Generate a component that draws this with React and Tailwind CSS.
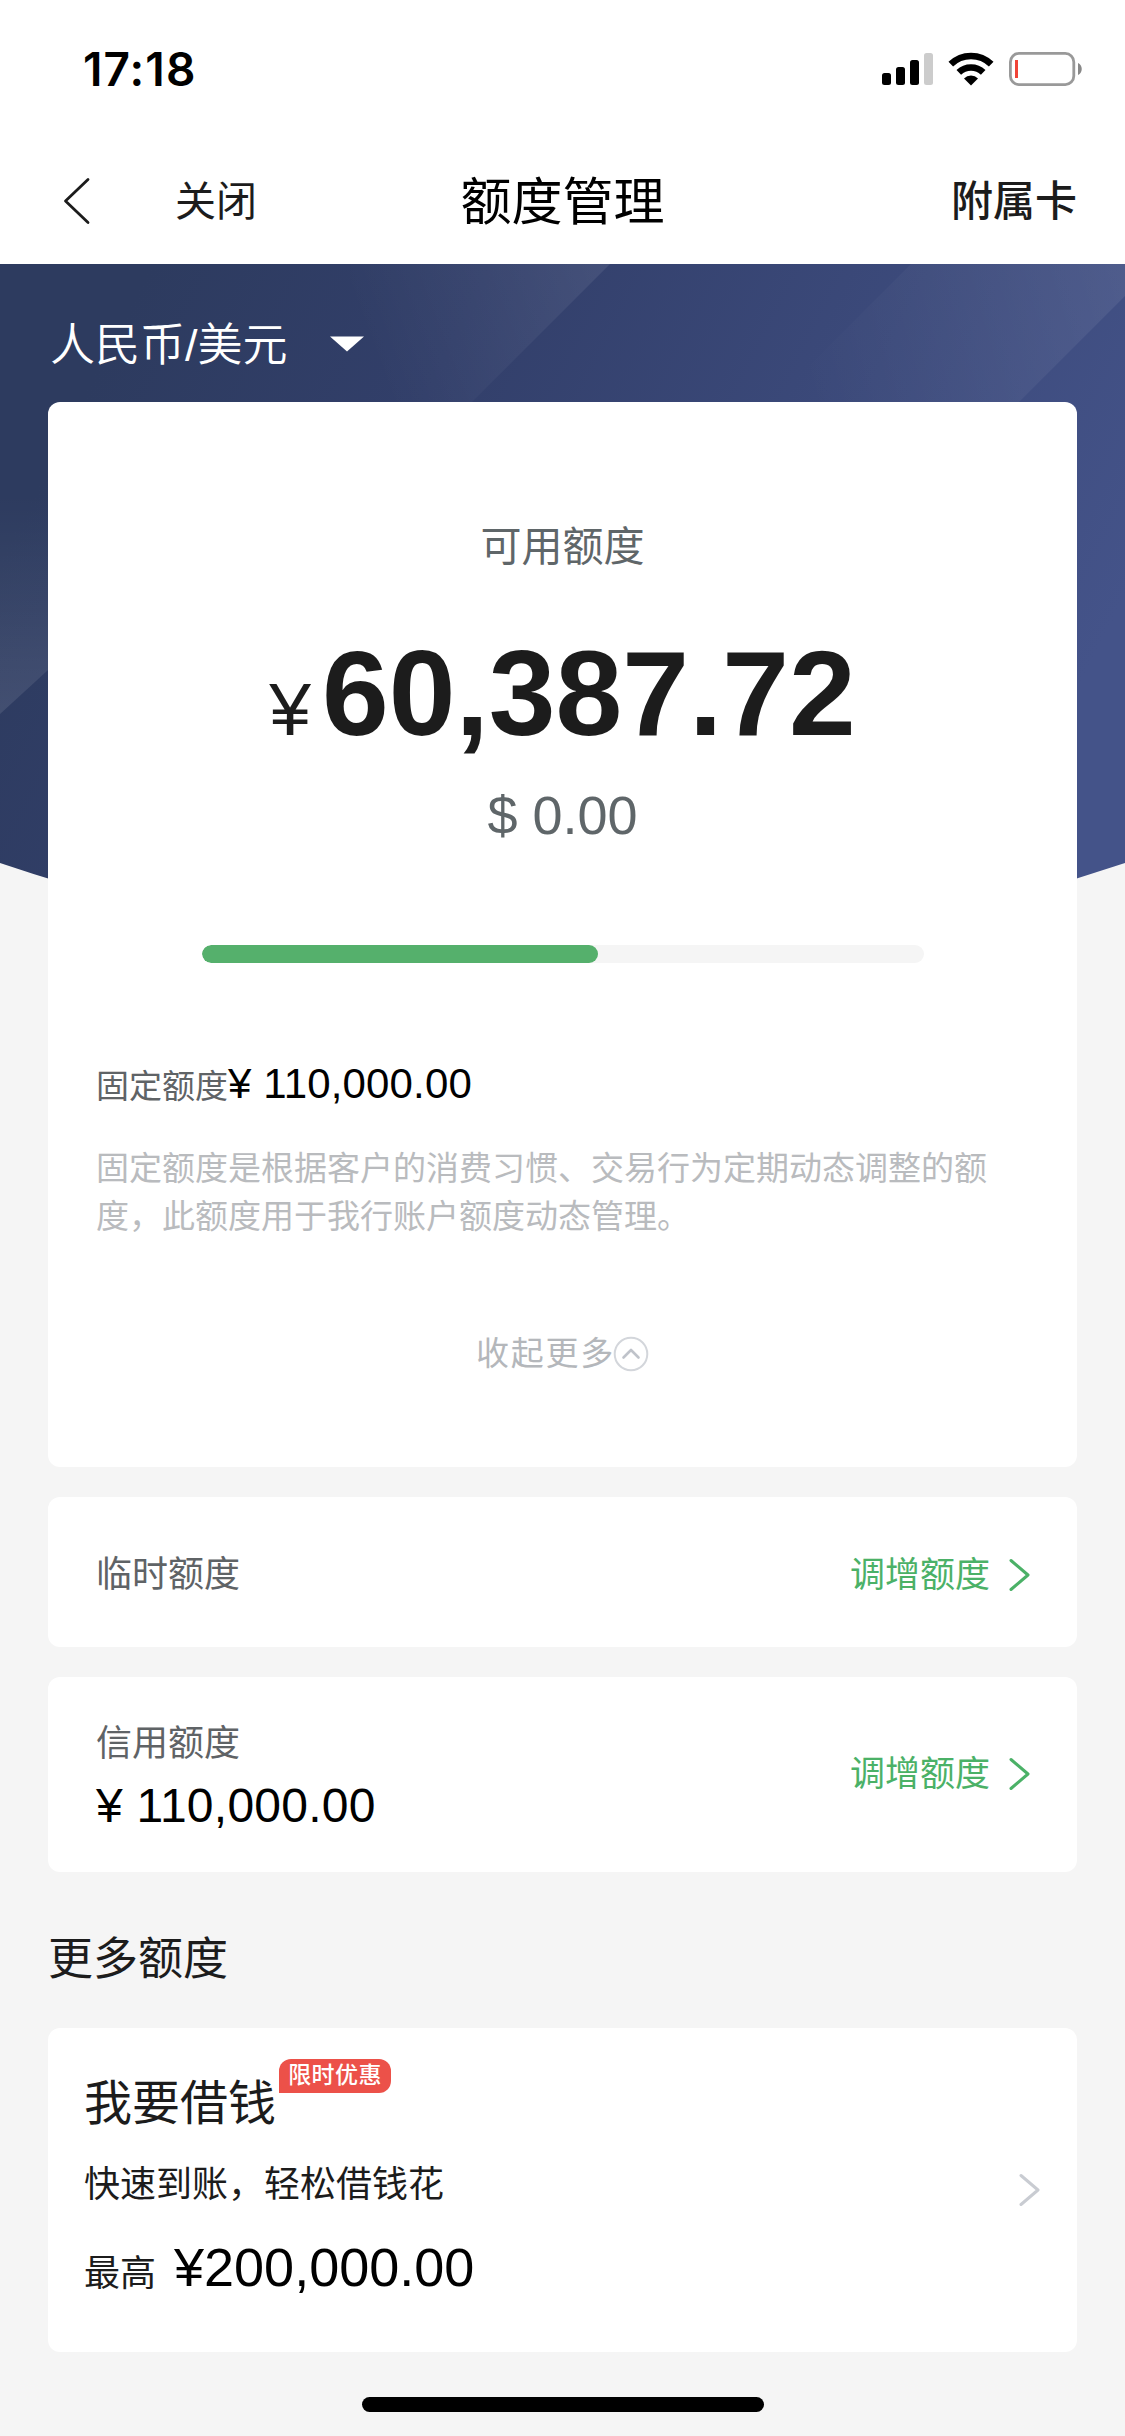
import { clsx } from 'clsx'

const CARD = 'rounded-xl bg-white'

function StatusBar() {
  return (
    <div className="flex h-[138px] items-center justify-between pl-[83px] pr-[42px]">
      <span className="font-['Inter'] text-[46px] leading-[56px] font-semibold tracking-[1.1px] text-black">17:18</span>
      <div className="flex items-center">
        <svg width="52" height="34" viewBox="0 0 52 34">
          <rect x="0" y="21" width="9" height="12" rx="2.5" fill="#000" />
          <rect x="14" y="15" width="9" height="18" rx="2.5" fill="#000" />
          <rect x="28" y="8" width="9" height="25" rx="2.5" fill="#000" />
          <rect x="42" y="1" width="9" height="32" rx="2.5" fill="#ccc" />
        </svg>
        <svg className="ml-[14px]" width="46" height="34" viewBox="0 0 46 34">
          <g fill="none" stroke="#000" strokeWidth="6.6">
            <path d="M2.8 12.2a29 29 0 0 1 40.4 0" />
            <path d="M10.8 20.4a17.6 17.6 0 0 1 24.4 0" />
          </g>
          <path d="M23 33.5l-7-7.1a10 10 0 0 1 14 0z" fill="#000" />
        </svg>
        <svg className="ml-[15px]" width="74" height="34" viewBox="0 0 74 34">
          <rect x="1.4" y="1.4" width="63.4" height="31.2" rx="8.5" fill="none" stroke="#999" strokeWidth="2.8" />
          <rect x="6" y="8" width="3" height="18" fill="#f04438" />
          <path d="M69 11c5 2 5 10 0 12z" fill="#888" />
        </svg>
      </div>
    </div>
  )
}

function NavBar() {
  return (
    <div className="grid h-[126px] grid-cols-3 items-center pr-[48px] pb-[1px] pl-[60px] text-[42px] text-[#1c1c1c]">
      <div className="flex items-center">
        <svg width="32" height="48" viewBox="0 0 32 48" fill="none" stroke="currentColor" strokeWidth="2.8" strokeLinecap="round" strokeLinejoin="round">
          <path d="M28 2.5L5.500 24L28 45.500" />
        </svg>
        <span className="ml-[83px] pt-[3px] text-[41px] leading-[48px]">关闭</span>
      </div>
      <h1 className="-mx-5 pt-[4px] pr-[12px] text-center text-[51px] leading-[60px] text-black">额度管理</h1>
      <span className="pt-[3px] text-right leading-[48px] font-medium">附属卡</span>
    </div>
  )
}

function HeroBackground() {
  return (
    <svg className="absolute inset-x-0 top-0 -z-10" width="1125" height="700" viewBox="0 0 1125 700">
      <defs>
        <linearGradient id="base" gradientUnits="userSpaceOnUse" x1="100" y1="100" x2="1010" y2="560">
          <stop offset="0" stopColor="#2d3b5f" />
          <stop offset="0.3" stopColor="#323f6a" />
          <stop offset="1" stopColor="#445389" />
        </linearGradient>
        <linearGradient id="bandA" gradientUnits="userSpaceOnUse" x1="370" y1="90" x2="610" y2="0">
          <stop offset="0" stopColor="#fff" stopOpacity="0" />
          <stop offset="1" stopColor="#fff" stopOpacity="0.08" />
        </linearGradient>
        <linearGradient id="bandB" gradientUnits="userSpaceOnUse" x1="800" y1="110" x2="1130" y2="20">
          <stop offset="0" stopColor="#fff" stopOpacity="0" />
          <stop offset="1" stopColor="#fff" stopOpacity="0.075" />
        </linearGradient>
        <linearGradient id="bandC" gradientUnits="userSpaceOnUse" x1="0" y1="230" x2="0" y2="450">
          <stop offset="0" stopColor="#fff" stopOpacity="0" />
          <stop offset="1" stopColor="#fff" stopOpacity="0.1" />
        </linearGradient>
      </defs>
      <path d="M0 0H1125V599Q562 789 0 599Z" fill="url(#base)" />
      <path d="M350 0H610L410 200H350Z" fill="url(#bandA)" />
      <path d="M911 0H1125V32L957 200H711Z" fill="url(#bandB)" />
      <path d="M0 200H273L0 450Z" fill="url(#bandC)" />
    </svg>
  )
}

function Chevron({ className }) {
  return (
    <svg className={className} width="22" height="34" viewBox="0 0 22 34" fill="none" stroke="currentColor" strokeWidth="3" strokeLinecap="round" strokeLinejoin="round">
      <path d="M2 2.500L19 17L2 31.500" />
    </svg>
  )
}

function AvailableCard() {
  return (
    <section className={clsx(CARD, 'flex h-[1065px] flex-col pt-[121px]')}>
      <p className="text-center text-[41px] leading-[48px] text-[#5f6669]">可用额度</p>
      <p className="mt-[57px] flex items-baseline justify-center text-[#1c1c1c]">
        <span className="mr-[11px] text-[75px] leading-[130px]">¥</span>
        <span className="text-[120px] leading-[130px] font-bold">60,387.72</span>
      </p>
      <p className="mt-[9px] text-center text-[54px] leading-[64px] text-[#5f6669]">$ 0.00</p>

      <div className="mx-auto mt-[98px] h-[18px] w-[722px] shrink-0 overflow-hidden rounded-full bg-[#f5f5f5]">
        <div className="h-full w-[396px] rounded-full bg-[#55b06c]" />
      </div>

      <div className="mt-[95px] flex items-baseline px-[48px] leading-[52px]">
        <span className="text-[33px] text-[#5f6366]">固定额度</span>
        <span className="text-[42px] tracking-[0.15px] text-black">¥ 110,000.00</span>
      </div>
      <p className="mt-[32px] px-[48px] text-[33px] leading-[48px] text-[#b9bbbe]">
        固定额度是根据客户的消费习惯、交易行为定期动态调整的额度，此额度用于我行账户额度动态管理。
      </p>

      <div className="mt-[89px] flex items-center justify-center text-[#b4b7bb]">
        <span className="text-[33px] leading-[48px] tracking-[1.8px]">收起更多</span>
        <svg className="-ml-[2px]" width="36" height="36" viewBox="0 0 36 36" fill="none" strokeLinecap="round" strokeLinejoin="round">
          <circle cx="18" cy="18" r="16.300" stroke="#d3d6db" strokeWidth="2" />
          <path d="M10.500 21.500L18 14L25.500 21.500" stroke="#bfc3ca" strokeWidth="2.600" />
        </svg>
      </div>
    </section>
  )
}

function QuotaRow({ label, amount, className }) {
  return (
    <section className={clsx(CARD, 'mt-[30px] flex items-center justify-between pr-[46px] pl-[48px]', className)}>
      <div className={clsx(amount && 'pt-[6px]')}>
        <p className="text-[36px] leading-[48px] text-[#5f6366]">{label}</p>
        {amount && <p className="mt-[10px] text-[48px] leading-[56px] tracking-[0.25px] text-black">{amount}</p>}
      </div>
      <div className="flex items-center text-[#4bb167]">
        <span className="text-[35px] leading-[48px]">调增额度</span>
        <Chevron className="ml-[19px]" />
      </div>
    </section>
  )
}

function LoanCard() {
  return (
    <section className={clsx(CARD, 'mt-[41px] flex h-[324px] items-center justify-between pr-[36px] pl-[36px]')}>
      <div className="pb-[16px] text-[#1c1c1c]">
        <div className="flex items-start">
          <p className="mt-[15px] text-[48px] leading-[60px]">我要借钱</p>
          <span className="ml-[3px] h-[34px] w-[112px] rounded-xl rounded-bl-none bg-[#ec5149] text-center text-[23px] leading-[33px] font-medium tracking-[0.4px] text-white">
            限时优惠
          </span>
        </div>
        <p className="mt-[27px] text-[36px] leading-[48px]">快速到账，轻松借钱花</p>
        <p className="mt-[26px] flex items-baseline leading-[64px]">
          <span className="text-[36px]">最高</span>
          <span className="ml-[18px] text-[54px] text-black">¥200,000.00</span>
        </p>
      </div>
      <Chevron className="text-[#c9ccd2]" />
    </section>
  )
}

export default function App() {
  return (
    <div className="flex h-[2436px] w-[1125px] flex-col overflow-hidden bg-[#f5f5f5] font-['Liberation_Sans','Noto_Sans_CJK_SC',sans-serif]">
      <header className="bg-white">
        <StatusBar />
        <NavBar />
      </header>

      <main className="relative isolate flex-1 px-[48px]">
        <HeroBackground />
        <div className="flex h-[138px] items-center pt-[22px] text-white">
          <span className="ml-[2px] pt-[3px] text-[45px] leading-[56px] font-[350]">人民币/美元</span>
          <svg className="ml-[42px]" width="34" height="16" viewBox="0 0 34 16">
            <path d="M0 0.500H34L17 15.500Z" fill="#fff" />
          </svg>
        </div>

        <AvailableCard />
        <QuotaRow label="临时额度" className="h-[150px] pt-[6px]" />
        <QuotaRow label="信用额度" amount="¥ 110,000.00" className="h-[195px] pb-[2px]" />

        <h2 className="mt-[61px] text-[45px] leading-[54px] text-[#1c1c1c]">更多额度</h2>
        <LoanCard />
      </main>

      <div className="mx-auto mb-[24px] h-[15px] w-[402px] shrink-0 rounded-full bg-black" />
    </div>
  )
}
